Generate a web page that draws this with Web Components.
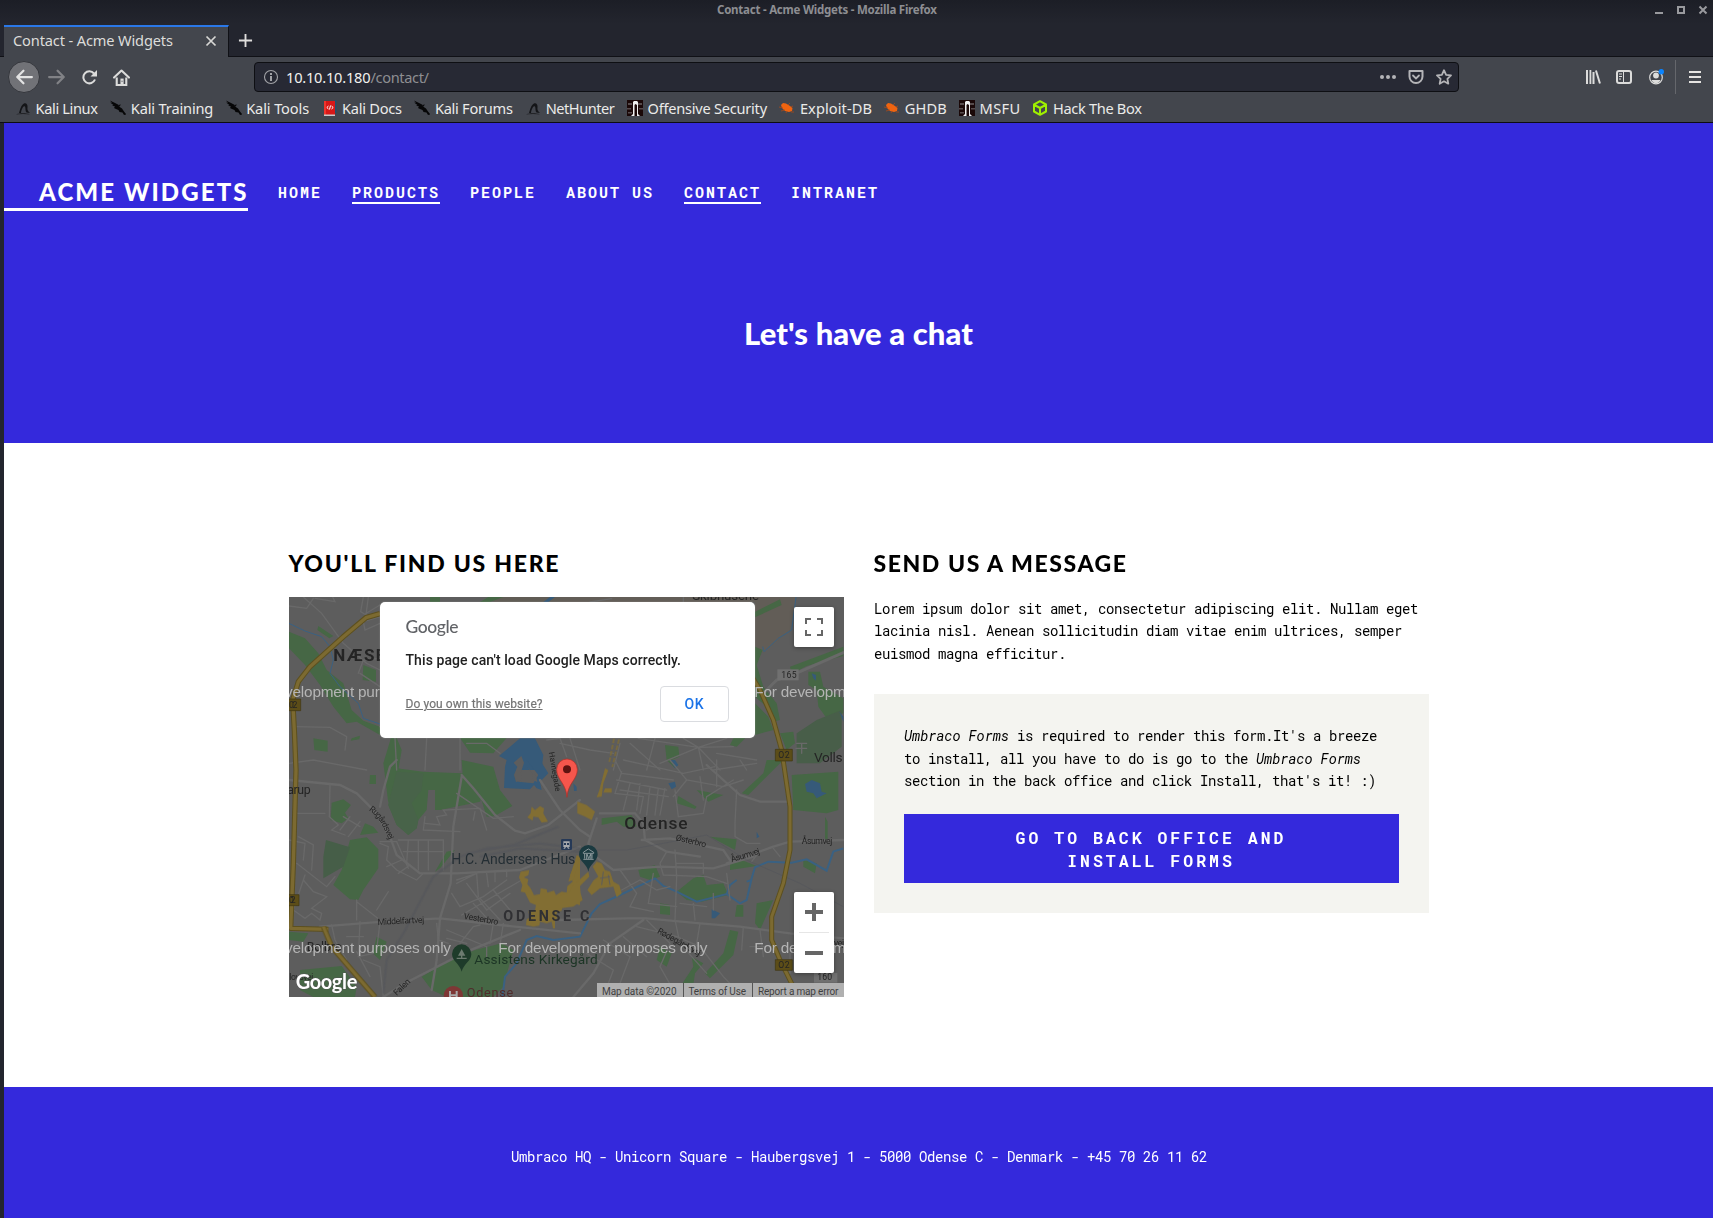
<!DOCTYPE html>
<html lang="en">
<head>
<meta charset="utf-8">
<title>Contact - Acme Widgets</title>
<style>
html,body{margin:0;padding:0}
body{width:1713px;height:1218px;overflow:hidden;background:#23252e;font-family:"Noto Sans",sans-serif}
</style>
</head>
<body>
<contact-screen></contact-screen>
<script>
const define=(name,html,init)=>customElements.define(name,class extends HTMLElement{
  connectedCallback(){
    if(this.shadowRoot)return;
    const root=this.attachShadow({mode:'open'});
    const t=document.createElement('template');
    t.innerHTML=typeof html==='function'?html(this):html;
    root.append(t.content.cloneNode(true));
    if(init)init(this,root);
  }
});

/* A single line of text that is tracked to fill the width in its "w" attribute. */
define('text-run','<style>:host{display:block;white-space:nowrap;flex:none}span{display:inline-block;text-decoration:inherit}</style><span><slot></slot></span>',(el,root)=>{
  const w=+el.getAttribute('w');
  if(!w)return;
  const s=root.querySelector('span'),n=[...el.textContent].length;
  const natural=s.getBoundingClientRect().width;
  s.style.letterSpacing=((w-natural)/(n-1)).toFixed(3)+'px';
  el.style.width=w+'px';
});

const dragon='<path d="M0 .500l3 1.500 2 1 3 1.500 1 2 3 2 2 3 2.500 3-2.500.5-1.500-2.500L9.500 12 8.500 10 6 9 4 8 5 6.500 2 5.500 3.500 5 0 2.500 2 3z" fill="#060607"/><path d="M8 5l3-.5L9 7z" fill="#0b0b0c"/>';
const kali='<path d="M4 13c1-3 2-8 5-9.500 2-1 4 1 3.500 4-.3 2 0 3.500 2.500 5.500l-3.500-.5C10 11 10.800 8 10 6.500 8.500 5 6.500 9 6 13z" fill="#141518"/><path d="M1 14.500c4-2 10-2 14 0-4-.8-10-.8-14 0z" fill="#222327"/>';
const offsec='<path d="M0 0h16v16H0z" fill="#1a0808"/><path d="M1 3h4v2H1zM11 3h4v2h-4zM0 8h4v1.500H0zM12 8h4v1.500h-4zM1 12h4v1.500H1z" fill="#564b4c"/><path d="M6 2l1-1h3l1 1v12l2 2h-3V5L8.500 4 7.500 5v11H4l2-2z" fill="#eee"/>';
const bug='<path d="M2 5l2-2 3 .5L11 6l2.500 2-.5 3-3 1-4-1-3-3z" fill="#ef6410"/><path d="M0 7l4 1M2 11l4-1M7 13l1-2M12 12l3 0M12 7l2-1M9 5l2-2" stroke="#a84a1a" stroke-width=".8"/>';
const glyphs={
  dragon,kali,offsec,bug,
  docs:'<path d="M2 1h11v14H2z" fill="#d81818"/><path d="M2 1h2v14H2z" fill="#f1342c"/><path d="M13 0h1.500v13H13z" fill="#20506f"/><path d="M2 14.500h11V16H2z" fill="#c9c9c9"/><path d="M6.500 6L4.800 7.500 6.500 9M9.500 6l1.700 1.500L9.500 9M8.500 5.500l-1 4" stroke="#fff" fill="none"/>',
  cube:'<path d="M8 1.200l6 3.300v7L8 14.800 2 11.500v-7zM2.500 5L8 8l5.500-3M8 8v6.500" fill="none" stroke="#9fef00" stroke-width="2" stroke-linejoin="round"/>',
  back:'<path d="M15 8H2M7.500 2.500L2 8l5.500 5.500" fill="none" stroke="#e3e3e3" stroke-width="2" stroke-linecap="round" stroke-linejoin="round"/>',
  forward:'<path d="M1 8h13M8.500 2.500L14 8l-5.500 5.500" fill="none" stroke="#818286" stroke-width="2" stroke-linecap="round" stroke-linejoin="round"/>',
  reload:'<path d="M14 10.500A6 6 0 1 1 13 4.500" fill="none" stroke="#dcdcdb" stroke-width="2"/><path d="M16 1v6.500H9.500z" fill="#dcdcdb"/>',
  home:'<path d="M1 8l7-6.500L15 8" fill="none" stroke="#dcdcdb" stroke-width="2" stroke-linecap="round" stroke-linejoin="round"/><path d="M3.500 8v7h9V8" fill="none" stroke="#dcdcdb" stroke-width="2"/><path d="M7 9h3v5.500H7z" fill="#dcdcdb"/><path d="M8 11h1v1H8z" fill="#43464d"/>',
  info:'<circle cx="8" cy="8" r="6.500" fill="none" stroke="#a2a3a7" stroke-width="1.100"/><path d="M7 7h2v5H7zM7 4h2v2H7z" fill="#a2a3a7"/>',
  dots:'<g fill="#b4b4b7"><circle cx="2" cy="8" r="2"/><circle cx="8" cy="8" r="2"/><circle cx="14" cy="8" r="2"/></g>',
  pocket:'<path d="M1.500 2h13v5.500a6.500 6.500 0 0 1-13 0z" fill="none" stroke="#b4b4b7" stroke-width="2" stroke-linejoin="round"/><path d="M5 6.500l3 3 3-3" fill="none" stroke="#b4b4b7" stroke-width="1.800" stroke-linecap="round"/>',
  star:'<path d="M8 1.200l2.100 4.600 4.900.6-3.600 3.400.9 4.900L8 12.300l-4.300 2.400.9-4.900L1 6.400l4.900-.6z" fill="none" stroke="#b4b4b7" stroke-width="1.800" stroke-linejoin="round"/>',
  library:'<path d="M1 1h2v14H1zM4.500 1h1.800v14H4.500zM7.500 3h2v12h-2zM10 1.800l1.900-.6 4 13-1.900.6z" fill="#dcdcdb"/>',
  sidebar:'<rect x="1" y="2" width="14" height="12" rx="2" fill="none" stroke="#dcdcdb" stroke-width="2"/><path d="M7.500 2v12M3 5h3M3 7.500h3M3 10h2" stroke="#dcdcdb"/>',
  account:'<circle cx="8" cy="8.500" r="6.300" fill="none" stroke="#dcdcdb" stroke-width="1.200"/><circle cx="8" cy="6.500" r="2.900" fill="#dcdcdb"/><path d="M3.500 11h9c-.7 2-2.500 3.200-4.500 3.200S4.200 13 3.500 11z" fill="#dcdcdb"/><circle cx="13.300" cy="2.800" r="2.700" fill="#0a84ff"/>',
  menu:'<path d="M2 3h12M2 8h12M2 13h12" stroke="#e6e4e2" stroke-width="2"/>',
  close:'<path d="M3.500 3.500l9 9M12.500 3.500l-9 9" stroke="#d7d7d5" stroke-width="1.700"/>',
  plus:'<path d="M8 1v14M1 8h14" stroke="#dfdedc" stroke-width="2"/>',
  min:'<path d="M4 11h8" stroke="#999a9e" stroke-width="2"/>',
  max:'<path d="M5 5h6v6H5z" fill="none" stroke="#999a9e" stroke-width="2"/>',
  quit:'<path d="M4.500 4.500l7 7M11.500 4.500l-7 7" stroke="#999a9e" stroke-width="2"/>'
};
define('line-icon',el=>`<style>:host{display:block;flex:none;line-height:0}svg{display:block}</style><svg width="${el.getAttribute('size')||16}" height="${el.getAttribute('size')||16}" viewBox="0 0 16 16">${glyphs[el.getAttribute('name')]}</svg>`);

define('window-title',`<style>
:host{display:grid;grid-template-columns:717px 220px 1fr;height:25px;background:linear-gradient(#1c1e26,#23252e 24px);color:#8d8e92;font:bold 11.500px/19px "Noto Sans",sans-serif}
text-run{grid-column:2}
.c{display:flex;justify-content:flex-end;gap:6px;padding:2px 2px 0 0;height:16px}
</style><text-run w="220">Contact - Acme Widgets - Mozilla Firefox</text-run><div class="c"><line-icon name="min"></line-icon><line-icon name="max"></line-icon><line-icon name="quit"></line-icon></div>`);

define('tab-strip',`<style>
:host{display:flex;height:32px;background:#23252e;padding-left:4px;box-shadow:inset 0 -1px #101116}
.tab{box-sizing:border-box;width:225px;height:32px;border-top:2px solid #2a78e8;background:#43464d;border-right:1px solid #101116;display:flex;align-items:flex-start;padding:0 9px 0 9px;justify-content:space-between;color:#ddddda;font:14.600px/26px "Noto Sans",sans-serif}
.tab line-icon{margin-top:6px}
.new{padding:8px 0 0 8.500px}
</style><div class="tab"><text-run w="160">Contact - Acme Widgets</text-run><line-icon name="close"></line-icon></div><div class="new"><line-icon name="plus" size="15"></line-icon></div>`);

define('nav-bar',`<style>
:host{display:flex;align-items:center;height:40px;padding-left:4px;background:#43464d}
.back{width:32px;height:32px;box-sizing:border-box;border-radius:50%;background:#717277;border:1px solid #34363c;display:grid;place-items:center;margin-left:4px}
.n{margin-left:9px;margin-right:-1px}
.u{box-sizing:border-box;width:1205px;height:30px;margin-left:125px;border:1px solid #0e0f13;border-radius:4px;background:#272934;display:flex;align-items:center;padding:0 6px 0 8px;font:14.600px/28px "Noto Sans",sans-serif;color:#f2f2ef}
.p{color:#8e8f92}.u .s{flex:1}.u line-icon+line-icon{margin-left:12px}
.r{display:flex;align-items:center;gap:15.500px;margin-left:125.500px}
.d{width:1px;height:34px;background:#65676c;margin-left:-4px}
.r .m{margin-left:-5px}
</style><div class="back"><line-icon name="back" size="18"></line-icon></div><line-icon class="n" style="margin-left:8px" name="forward" size="18"></line-icon><line-icon class="n" style="margin-left:16px" name="reload"></line-icon><line-icon class="n" style="margin-left:17px" name="home" size="17"></line-icon>
<div class="u"><line-icon name="info"></line-icon><text-run w="84.500" style="margin-left:7px">10.10.10.180</text-run><text-run class="p" w="58.500">/contact/</text-run><i class="s"></i><line-icon name="dots"></line-icon><line-icon name="pocket"></line-icon><line-icon name="star"></line-icon></div>
<div class="r"><line-icon name="library"></line-icon><line-icon name="sidebar"></line-icon><line-icon name="account"></line-icon><i class="d"></i><line-icon class="m" name="menu"></line-icon></div>`);

define('book-mark',el=>`<style>:host{display:flex;align-items:center;gap:4.500px;color:#ebebe9;font:14.600px/22px "Noto Sans",sans-serif}</style><line-icon name="${el.getAttribute('icon')}"></line-icon><text-run w="${el.getAttribute('w')}">${el.textContent}</text-run>`);
define('bookmark-bar',`<style>:host{display:flex;gap:12.350px;align-items:center;box-sizing:border-box;height:26px;padding:0 0 3px 15px;background:#43464d;border-bottom:1px solid #0c0c12}</style>
<book-mark icon="kali" w="62.500">Kali Linux</book-mark><book-mark icon="dragon" w="82.500">Kali Training</book-mark><book-mark icon="dragon" w="63">Kali Tools</book-mark><book-mark icon="docs" w="60">Kali Docs</book-mark><book-mark icon="dragon" w="78">Kali Forums</book-mark><book-mark icon="kali" w="69">NetHunter</book-mark><book-mark icon="offsec" w="119.500">Offensive Security</book-mark><book-mark icon="bug" w="72">Exploit-DB</book-mark><book-mark icon="bug" w="42">GHDB</book-mark><book-mark icon="offsec" w="40.500">MSFU</book-mark><book-mark icon="cube" w="89">Hack The Box</book-mark>`);

define('site-header',`<style>
:host{display:block;box-sizing:border-box;height:320px;background:#3429dc;color:#fff}
nav{display:flex;gap:30px;height:88px;align-items:flex-end}
.b{box-sizing:border-box;width:244px;padding-left:35px;border-bottom:3px solid #fff;font:900 24px/32px "Lato Black",Lato,sans-serif}
.i{font:bold 15px/20px "Roboto Mono","Liberation Mono",monospace;letter-spacing:1.998px;margin-bottom:7px;border-bottom:2px solid transparent;white-space:pre}
.on{border-color:#fff}
h1{margin:0;padding-top:101px;display:flex;justify-content:center;font:900 31px/42px "Lato Black",Lato,sans-serif}
</style><nav><div class="b"><text-run w="207.500">ACME WIDGETS</text-run></div><span class="i">HOME</span><span class="i on">PRODUCTS</span><span class="i">PEOPLE</span><span class="i">ABOUT US</span><span class="i on">CONTACT</span><span class="i">INTRANET</span></nav>
<h1><text-run w="229">Let's have a chat</text-run></h1>`);

define('map-dialog',`<style>
:host{display:flex;flex-direction:column;box-sizing:border-box;width:375px;height:136px;background:#fff;border-radius:5px;padding:13px 26px 16px 26px;box-shadow:0 0 2px #aaa8}
.g{font:500 17.500px/23px Lato,sans-serif;color:#616367}
.t{font:500 14px/20px Roboto,sans-serif;color:#212121;margin-top:12px}
.f{display:flex;justify-content:space-between;align-items:center;margin-top:auto}
.q{font:12px/16px Roboto,sans-serif;color:#757575;text-decoration:underline;-webkit-text-stroke:.2px #757575}
.ok{box-sizing:border-box;width:69px;height:36px;border:1px solid #dadce0;border-radius:4px;display:grid;place-items:center;color:#1a73e8;font:500 14px/20px Roboto,sans-serif}
.ok text-run{padding-bottom:1px}
</style><text-run class="g" w="53">Google</text-run><text-run class="t" w="275.500">This page can't load Google Maps correctly.</text-run><div class="f"><text-run class="q" w="137">Do you own this website?</text-run><div class="ok"><text-run w="19">OK</text-run></div></div>`);

/* Map artwork is drawn in units of a third of a pixel; four quadrant groups share the same canvas. */
const UL='<g transform="translate(-27 -201)">',UR='<g transform="translate(813 -201)">',LL='<g transform="translate(-27 489)">',LR='<g transform="translate(813 489)">';
const mapArt=`
<rect width="1665" height="1200" fill="#5d5d5d"/>
${UL}<path d="M640 201H900V220H640z" fill="#605c55"/></g>
${UR}<path d="M0 201H710L690 300 610 368 585 350V216H0z" fill="#625d57"/></g>
<g fill="#466745">
${UL}<path d="M27 305L75 325 115 370 140 420 190 460 215 540 250 572 300 590V615L230 575 200 580 160 530 120 465 75 405 27 355zM115 288L160 318 148 325 112 300zM250 405L288 420V455L248 450zM100 625L143 632V665L103 660zM215 625L240 617 238 628 212 632zM340 600L365 660 355 720 325 820 310 700zM540 624H680L640 670 570 668z"/><path d="M600 216L625 201H670L630 216zM450 201H480V216H450z"/></g>
${UR}<path d="M585 245L660 208 665 225 585 262zM690 410L850 350V378L740 408 695 432zM745 425H780L790 470 850 505V550L800 565 775 530 770 480 745 465zM585 350L608 360 590 405 610 470 650 520 660 570 640 575 620 530 585 500zM585 520L625 560 640 600 585 615zM660 610L700 605 705 640 680 660zM520 625L560 620 530 650 510 645zM315 645L355 650 358 680 335 690 345 715 320 690z"/><path d="M710 610L770 570 845 540V650L780 700H710z" fill="#485e49"/></g>
${LL}<path d="M350 25L430 35 545 40 620 50 600 125 480 150H465V90H445L440 150 415 180 410 205 385 225 350 195 325 135z"/><path d="M545 0L640 20 660 90 697 138 645 168 620 170 595 90 548 45zM270 45H288V72H268zM155 128L190 118 213 135 195 158 205 175 185 190 152 180zM255 190L280 200 295 218 240 225zM210 240L260 232 295 268V325L250 390 235 420 210 418 160 375 185 330zM500 275L525 270 480 325 465 335zM290 530L320 545 300 600 278 580zM27 515L85 520 70 545 27 540zM60 630L185 618 230 680 225 711H100L60 690zM425 650L500 605 585 570 665 550 700 570 670 680 640 711H500L455 690z"/><path d="M138 240L210 262 190 320 130 355 130 290z" fill="#465e48"/><path d="M350 35L430 40 425 90 395 130 415 180 410 205 385 225 350 195 325 135z" fill="#486349"/></g>
${LR}<path d="M670 0L565 105 545 100 610 40 620 0zM695 45L835 35V150L800 160 700 150zM355 108L410 140 405 147 350 130zM410 90L490 105 445 125zM125 175L215 165 230 200 190 200 170 185 125 195zM450 230L530 238 525 270zM510 310L545 300 590 318 510 330zM235 330L285 315 300 350 270 360 240 350zM350 395L400 355 430 345 440 375 490 370 505 405 425 425 380 420zM300 430L330 435V465L300 462zM530 435H550V470H525zM590 430L640 420 600 510 585 490zM510 510L535 515 520 585 450 655 435 640 490 580zM395 590L430 610 405 640 400 675 360 711H340L400 620zM730 300L770 310 765 340 730 320zM795 170L803 185V245L795 235z"/><path d="M300 560L335 580 320 620 290 600z"/></g>
</g>
<g fill="#365a79">
${UL}<path d="M657 678L720 625H765L790 675 785 720H690L700 700z"/><path d="M790 216L810 201H825L805 216z"/></g>
${LL}<path d="M680 0L720 0 710 40 715 65 760 70 775 45 740 0H780L805 40 795 50 780 65 785 90 770 85 762 75 750 88 672 84 675 20zM880 70L890 80V92L882 92z"/><path d="M701 8L712 20 702 45 708 66 722 62 728 66 722 40 732 8 724 -12zM742 22L756 38 758 60 772 66 768 48z" fill="#5d5d5d"/></g>
${LR}<path d="M735 72L755 60 780 70 785 95 800 100 770 115 760 100 740 95zM325 70L345 65 348 80 335 88zM455 448L480 460 465 475H455zM590 215L598 230 590 235zM330 0H345L355 15 345 25zM42 80L50 92H42z"/></g>
${UR}<path d="M755 430L768 435V452L760 445zM838 545L850 560V575z"/></g>
</g>
<g fill="none" stroke="#3a6182" stroke-width="3">
${UL}<path d="M27 280L75 303 125 320 150 350 160 390 150 430 180 470 235 520 250 565 300 582"/></g>
${UR}<path d="M708 201L695 300 655 325 612 365 608 350"/></g>
${LR}<path d="M-180 770L-165 650 -130 610 -100 540-70 528-20 540 60 530 95 460 120 432 180 405 285 355 310 378 350 395 410 425 500 402 540 430 560 420 575 355 585 322 625 305 695 308 740 298 800 332 820 275 850 265M500 402L510 375 530 360M560 365L575 360" stroke-width="6"/></g></g>
<g fill="none" stroke="#696969" stroke-width="4" stroke-linecap="round">
${UL}<path d="M70 201L125 250 190 340 260 400 300 420M27 228L80 235 100 205M105 205L165 215 158 201M250 201L242 245 258 255 265 201M255 252L300 225M300 280L255 300 250 275 300 260M235 430L250 390 300 385M240 430L300 470M45 590L150 592 200 620 195 660M300 590L345 625 350 720M440 625L435 720M540 625V720M560 640L620 640 660 670M27 700L100 690 260 720M800 630L840 625 860 680"/></g>
${UR}<path d="M610 490L650 450 720 425 850 368" stroke-width="9"/><path d="M370 201V216M90 216L155 206M0 640L90 660 160 670M30 625L60 720M180 640L160 720M210 640L300 720M235 625L415 652 520 650M415 652L500 625M415 652L300 700M415 652L430 720M415 652L480 720M415 652L370 625M285 625L260 720M470 670L590 690M710 640H740M725 640V670M708 655H740"/></g>
${LL}<path d="M27 60L180 75 230 100 280 150 330 230 350 285 420 340 530 340 720 330 900 260M545 45L580 85 645 165 705 212 735 220 805 195 900 120M545 50L520 200 512 370 480 475 470 600 455 690M120 500L310 485 480 475 660 495 900 520M310 711L375 670 560 575 720 510M350 0L330 20 310 90 300 140" stroke-width="7"/><path d="M150 75L148 170 175 195 155 210 195 225M50 160H135M55 230L100 255 95 330M27 240L75 250 70 300M50 310L140 380 165 350M210 170L180 210M240 185L205 230M190 170L240 200M75 345L40 450 75 475 95 460 120 480 125 460 95 445 140 410 100 395 70 360M230 420V480M230 425L300 480M325 395L290 450M300 250L325 260 320 300 350 330 410 360 430 340M355 340L390 315M320 320L365 300M385 325L350 245H300M385 240L380 310M355 240H490V330M415 240V330M445 240V330M370 275H490M435 170L430 210 540 215M435 190L480 195 470 170 500 165 490 150 600 145 620 210M530 100L640 175 700 170M580 180L585 155M530 360L590 340M590 340L595 410M620 340L625 380M645 335V365M680 330V350M540 365L590 340M515 400L540 440 610 410 680 360M560 370L620 450 690 400M545 465L725 360M600 415L660 480M580 430L635 490M640 390L690 450M530 370L550 360M500 510L620 560 620 590M500 535L560 550M540 550L580 500 600 495M640 490L630 550M670 490L660 555M155 495L165 540 200 600M240 485L235 590 280 580M200 530L250 530M300 485L290 570M310 490L365 475M470 490L475 540 505 550M250 600L300 620 310 711M230 575L270 650"/></g>
${LR}<path d="M-60 60L-20 120 0 150 60 210 90 230M0 480L200 475 260 475 420 490 540 500 690 520 850 535M120 160H225L250 190 255 240 320 275 420 290M245 240L330 235 490 270 510 300M440 15L540 105 600 125H690M500 310L640 260 690 245 850 240M110 175L85 250 100 285 160 330 300 320 460 325 580 290M250 480L150 550 100 640 40 711" stroke-width="7"/><path d="M345 270L350 350 345 480 360 550 440 640M320 180L260 210M345 90L355 170 430 160 440 110 520 60M185 35L165 100 250 110 240 160M165 0L185 40 340 60M190 0L370 40 465 20M210 70L190 150M240 70L230 150M270 80L260 165M295 85L285 165M315 85L300 165M170 60L320 90M180 90L325 110M330 0L380 60 490 80 550 60M380 60L340 110M420 50L430 120M470 0L470 80M460 30L590 10M540 0L560 30M530 90L525 190 525 230 560 250H600M185 390L240 360 290 390 330 380M180 330L230 400 210 440 280 455M280 340L265 430 350 440M320 275L300 310 310 345 440 350M350 310H430L430 340M440 350L500 370M500 340L510 420M590 285L575 305M640 265L660 290M260 480L330 550 300 620 340 690M130 540L210 590 180 670M190 530L260 590M80 580L160 630 130 711M230 500L350 530 420 560 490 650 550 711M420 490L410 550M550 500L545 570M600 510L610 590M640 560H570M690 580L690 640M400 430L405 480M460 400V450M360 430L440 440"/></g></g>
<g fill="none" stroke="#54565c" stroke-width="6" opacity=".6">
${LL}<path d="M310 700L320 600 370 520 460 350 540 290 620 265 780 250 900 265M560 280L700 255 835 200M600 290L720 265 900 275"/></g>${LR}<path d="M0 270L200 270 310 250 440 225 560 300 720 370 850 440" stroke-width="3"/></g></g>
<g fill="#826e33">
${LL}<path d="M755 140L765 150 780 138 792 145 790 160 804 185 785 188 775 172 760 170 758 182 742 172 752 160z"/><path d="M722 335L748 330 745 345 732 352 745 358 742 372 752 385 762 405 780 402 782 385 800 388 802 398 822 392 828 405 845 395 860 398 862 378 878 365 870 345 890 300 900 290V435L880 430 862 440 850 432 845 452 830 458 832 475 825 480 825 505H819L815 485 800 490 780 485 778 497 760 500 738 495 740 478 750 472 745 455 765 450 768 435 750 428 740 408 735 398 722 395 727 375 717 352z"/></g>
${LR}<path d="M52 125L80 135 105 155 95 180 75 170 52 160z"/><path d="M110 305L125 310 135 330 150 335 160 365 178 375 185 400 170 412 160 380 120 385 95 405 82 390 100 362 115 350 98 320zM85 335L88 350 60 378 62 400 68 420 40 440 0 445V405L30 395 35 380 52 365zM50 285L60 290 40 360 25 365zM135 25L145 30 130 70 125 110 110 112 118 90zM135 85H155V98H130z"/><path d="M120 355L150 350M130 335L125 375M145 345L150 375" stroke="#5d5d5d" stroke-width="3"/></g></g>
<path d="M975 425L960 500M990 427L970 510" stroke="#826e33" stroke-width="4" stroke-dasharray="14 5"/>
<g fill="none" stroke-linejoin="round">
${UL}<path d="M300 251L258 263 190 320 90 410 55 455 38 510 43 600 48 720 40 1000 32 1195 145 1198" stroke="#5d501f" stroke-width="16"/><path d="M300 251L258 263 190 320 90 410 55 455 38 510 43 600 48 720 40 1000 32 1195 145 1198" stroke="#7c6a31" stroke-width="10"/></g>
${LL}<path d="M130 500L155 560 285 711" stroke="#5d501f" stroke-width="16"/><path d="M130 500L155 560 285 711" stroke="#7c6a31" stroke-width="10"/></g>
${UR}<path d="M570 430L600 480 640 570 665 660 690 830 690 960 670 1060 635 1160 635 1230 660 1290 715 1401" stroke="#5d501f" stroke-width="15"/><path d="M570 430L600 480 640 570 665 660 690 830 690 960 670 1060 635 1160 635 1230 660 1290 715 1401" stroke="#7c6a31" stroke-width="9"/></g></g>
<g fill="#5c4d18" stroke="#403611" stroke-width="2"><path d="M-20 306H35V341H-20zM1459 457H1510V492H1459zM-20 893H30V926H-20zM1459 1088H1510V1120H1459z"/></g>
<g fill="#707070"><path d="M1465 217H1529V250H1465z"/><path d="M1575 1128H1645V1157H1575z"/></g>
<g font-family="Roboto,sans-serif" fill="#242424" font-size="26">
${UL}<text x="27" y="534" textLength="25">02</text><text x="160" y="392" font-size="51" font-weight="700" letter-spacing="4">NÆSBY</text><text transform="translate(806 667) rotate(80)" font-size="24" textLength="120">Havnegade</text></g>
${UR}<text x="655" y="685" textLength="34">O2</text><text x="664" y="444" textLength="46">165</text><text x="762" y="696" font-size="41" textLength="86">Volls</text><text x="397" y="209" font-size="40" textLength="200">Skibhusene</text></g>
${LL}<text x="27" y="429" textLength="20">02</text><text x="22" y="101" font-size="37" textLength="70">arup</text><path id="ru" d="M266 150Q305 175 330 250" fill="none"/><text font-size="25"><textPath href="#ru" textLength="110">Rugårdsvej</textPath></text><text transform="translate(293 495) rotate(-3)" textLength="140">Middelfartvej</text><text transform="translate(550 476) rotate(10)" textLength="105">Vesterbro</text><text x="80" y="573" font-size="37" textLength="105">Bolbro</text><text x="28" y="660" textLength="72">lovsvej</text><text transform="translate(350 708) rotate(-44)" textLength="60">Falen</text><text x="514" y="312" fill="#242e34" font-size="42" textLength="372">H.C. Andersens Hus</text><text x="670" y="482" font-size="43" font-weight="700" textLength="258" fill="#303033">ODENSE C</text><text x="583" y="613" fill="#1c3525" font-size="41" textLength="370">Assistens Kirkegård</text><text x="560" y="711" fill="#502c2c" font-size="38" textLength="140">Odense</text></g>
${LR}<text x="193" y="208" font-size="52" font-weight="500" textLength="190">Odense</text><text transform="translate(346 241) rotate(13)" textLength="93">Østerbro</text><text transform="translate(515 307) rotate(-17)" textLength="90">Åsumvej</text><text x="725" y="251" textLength="92">Åsumvej</text><text transform="translate(290 518) rotate(29)" textLength="145">Rødegårdsvej</text><text x="655" y="625" textLength="34">O2</text><text x="772" y="661" textLength="44">160</text><text x="822" y="558" textLength="30">vej</text></g></g>
<g font-family="Liberation Sans,Arial,sans-serif" font-size="46" fill="#b5b5b5">
${UL}<text x="-114" y="502" textLength="627">For development purposes only</text></g>${UR}<text x="583" y="502" textLength="627">For development purposes only</text></g>
${LL}<text x="-114" y="580" textLength="627">For development purposes only</text><text x="655" y="580" textLength="627">For development purposes only</text></g>${LR}<text x="583" y="580" textLength="627">For development purposes only</text></g></g>
${LL}<path d="M545 635C540 612 516 603 516 582A29 29 0 0 1 574 582C574 603 550 612 545 635z" fill="#1e3b2a"/><path d="M545 567l-11 20h9v6h-13v4h30v-4h-13v-6h9z" fill="#6c7b70"/><circle cx="520" cy="707" r="29" fill="#7e3735"/><path d="M510 693V711M530 693V711M510 706H530" stroke="#aaa" stroke-width="6"/><rect x="843" y="237" width="33" height="33" rx="4" fill="#263957"/><path d="M850 244h19v17h-4l4 5h-5l-3-5h-3l-3 5h-5l4-5h-4z" fill="#a6a8ad"/><path d="M852 249h6v6h-6zM861 249h6v6h-6z" fill="#263957"/></g>
${LR}<path d="M85 335C82 313 57 304 57 283A28 28 0 0 1 113 283C113 304 88 313 85 335z" fill="#1b3a40"/><path d="M70 277L85 267 101 277V280H70zM74 281V296M96 281V296M70 298H101" stroke="#8b989b" stroke-width="3" fill="none"/><text x="77" y="297" font-family="Roboto,sans-serif" font-size="21" font-weight="700" fill="#8b989b" textLength="17">M</text>
<path d="M21 112C18 68-10 60-10 28A31 31 0 0 1 52 28C52 60 24 68 21 112z" fill="#f5564c" stroke="#b32c26" stroke-width="2"/><circle cx="21" cy="28" r="12" fill="#5e1310"/></g>
${LL}<text x="47" y="688" font-family="Lato,sans-serif" font-size="60" font-weight="700" fill="#fff" textLength="185" stroke="#555" stroke-width="3" paint-order="stroke">Google</text></g>`;

define('odense-map',`<style>
:host{display:grid;width:555px;height:400px;overflow:hidden;grid-template:400px/555px}
:host>*{grid-area:1/1}
svg{display:block}
.o{display:flex;justify-content:space-between;padding:5px 10px 0 91px}
.c{display:flex;flex-direction:column;justify-content:space-between;height:366px;padding-top:5px}
.k{width:40px;background:#fff;border-radius:2px;box-shadow:0 1px 4px #0005}
.a{align-self:end;justify-self:end;display:flex;width:247px;height:14px;box-sizing:border-box;background:#b0b0b0;font:10px/17px Roboto,sans-serif;color:#3f3f3f;padding-left:5.500px}
.a i{width:1px;background:#555;margin:0 5px 0 6px}
</style>
<svg width="555" height="400" viewBox="0 0 1665 1200">${mapArt}</svg>
<div class="o"><map-dialog></map-dialog><div class="c"><div class="k"><svg width="40" height="40"><path d="M12 17v-5h5M23 12h5v5M28 23v5h-5M17 28h-5v-5" fill="none" stroke="#666" stroke-width="2"/></svg></div><div class="k"><svg width="40" height="81"><path d="M11 20H29M20 11V29M11 61H29" stroke="#666" stroke-width="4"/><path d="M5 40.500H35" stroke="#e6e6e6"/></svg></div></div></div>
<div class="a"><text-run w="74.500">Map data ©2020</text-run><i></i><text-run w="57.500">Terms of Use</text-run><i></i><text-run w="80.500">Report a map error</text-run></div>`);

define('site-main',`<style>
:host{display:grid;grid-template-columns:555px 555px;gap:30px;justify-content:center;align-items:start;box-sizing:border-box;height:644px;padding-top:104px;background:#fff;color:#000}
h2{margin:0 0 18px;font:900 23px/32px "Lato Black",Lato,sans-serif}
p{margin:0;font:14px/22.500px "Roboto Mono","Liberation Mono",monospace;letter-spacing:-.401px;white-space:nowrap;text-indent:0}
em{letter-spacing:-.15px}
.l{padding:.5px 0 0 .5px}
.box{box-sizing:border-box;width:555px;height:219px;margin-top:28.500px;padding:31.500px 30px 0 30.500px;background:#f4f4f0}
.btn{box-sizing:border-box;margin:21px 0 0 -.5px;height:69px;padding-top:12px;background:#3429dc;color:#fff;text-align:center;font:bold 16.500px/23px "Roboto Mono","Liberation Mono",monospace;letter-spacing:3px}
</style>
<section><h2><text-run w="270">YOU'LL FIND US HERE</text-run></h2><odense-map></odense-map></section>
<section><h2><text-run w="252.500">SEND US A MESSAGE</text-run></h2><p class="l">Lorem ipsum dolor sit amet, consectetur adipiscing elit. Nullam eget<br>lacinia nisl. Aenean sollicitudin diam vitae enim ultrices, semper<br>euismod magna efficitur.</p>
<div class="box"><p><em>Umbraco Forms</em> is required to render this form.It's a breeze<br>to install, all you have to do is go to the <em>Umbraco Forms</em><br>section in the back office and click Install, that's it! :)</p><div class="btn">GO TO BACK OFFICE AND<br>INSTALL FORMS</div></div></section>`);

define('site-footer',`<style>:host{display:flex;justify-content:center;box-sizing:border-box;height:131px;padding:58px 0 0 1px;background:#3429dc;color:#fff;font:14px/23px "Roboto Mono","Liberation Mono",monospace;letter-spacing:-.401px}</style><span>Umbraco HQ - Unicorn Square - Haubergsvej 1 - 5000 Odense C - Denmark - +45 70 26 11 62</span>`);

define('contact-screen',`<style>:host{display:block;width:1713px;height:1218px;background:#23252e}.page{margin-left:4px}</style>
<window-title></window-title><tab-strip></tab-strip><nav-bar></nav-bar><bookmark-bar></bookmark-bar><div class="page"><site-header></site-header><site-main></site-main><site-footer></site-footer></div>`);
</script>
</body>
</html>
